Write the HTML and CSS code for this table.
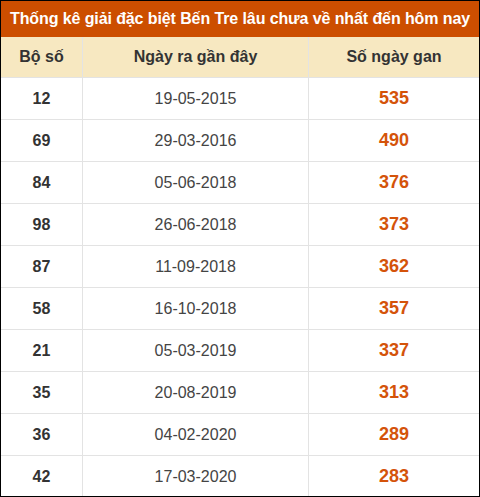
FILE: index.html
```html
<!DOCTYPE html>
<html lang="vi">
<head>
<meta charset="utf-8">
<link rel="stylesheet" href="styles.css">
</head>
<body>
<div class="box">
  <div class="title">Thống kê giải đặc biệt Bến Tre lâu chưa về nhất đến hôm nay</div>
  <table class="tbl">
    <thead>
      <tr><th class="c1">Bộ số</th><th class="c2">Ngày ra gần đây</th><th class="c3">Số ngày gan</th></tr>
    </thead>
    <tbody>
      <tr><td class="num">12</td><td class="date">19-05-2015</td><td class="gan">535</td></tr>
      <tr><td class="num">69</td><td class="date">29-03-2016</td><td class="gan">490</td></tr>
      <tr><td class="num">84</td><td class="date">05-06-2018</td><td class="gan">376</td></tr>
      <tr><td class="num">98</td><td class="date">26-06-2018</td><td class="gan">373</td></tr>
      <tr><td class="num">87</td><td class="date">11-09-2018</td><td class="gan">362</td></tr>
      <tr><td class="num">58</td><td class="date">16-10-2018</td><td class="gan">357</td></tr>
      <tr><td class="num">21</td><td class="date">05-03-2019</td><td class="gan">337</td></tr>
      <tr><td class="num">35</td><td class="date">20-08-2019</td><td class="gan">313</td></tr>
      <tr><td class="num">36</td><td class="date">04-02-2020</td><td class="gan">289</td></tr>
      <tr><td class="num">42</td><td class="date">17-03-2020</td><td class="gan">283</td></tr>
    </tbody>
  </table>
</div>
</body>
</html>
```
FILE: styles.css
```css
html, body { margin: 0; padding: 0; background: #fff; }
body { font-family: "Liberation Sans", Arial, sans-serif; }
.box {
  width: 480px;
  height: 497px;
  box-sizing: border-box;
  border: 1px solid #000;
  overflow: hidden;
}
.title {
  background: #cc4e00;
  color: #fff;
  font-weight: bold;
  font-size: 16px;
  letter-spacing: -0.1px;
  height: 36px;
  line-height: 36px;
  text-align: center;
  white-space: nowrap;
}
.tbl {
  width: 100%;
  border-collapse: collapse;
  table-layout: fixed;
}
.tbl th, .tbl td {
  border: 1px solid #e3e3e3;
  text-align: center;
  padding: 0;
}
.tbl tr > :first-child { border-left: none; }
.tbl tr > :last-child { border-right: none; }
.tbl thead tr th { border-top: none; }
.tbl tbody tr:last-child td { border-bottom: none; }
.tbl th {
  background: #f7e8c1;
  color: #333;
  font-size: 16px;
  font-weight: bold;
  height: 40px;
}
.c1 { width: 81px; }
.c2 { width: 225px; }
.tbl td { height: 41px; }
.num { font-weight: bold; font-size: 16px; color: #333; }
.date { font-size: 16px; color: #444; }
.gan { font-weight: bold; font-size: 18px; color: #d4530a; }
```
